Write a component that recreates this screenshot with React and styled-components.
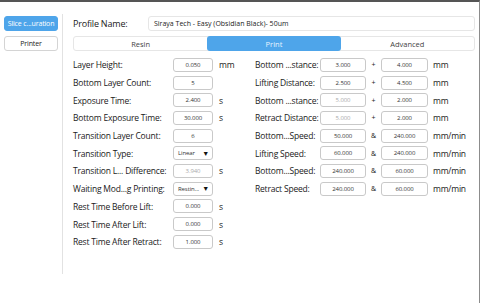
import React from "react";
import styled, { createGlobalStyle } from "styled-components";

const leftRows = [
  { label: "Layer Height:", value: "0.050", unit: "mm" },
  { label: "Bottom Layer Count:", value: "5" },
  { label: "Exposure Time:", value: "2.400", unit: "s" },
  { label: "Bottom Exposure Time:", value: "30.000", unit: "s" },
  { label: "Transition Layer Count:", value: "6" },
  { label: "Transition Type:", select: "Linear" },
  { label: "Transition L... Difference:", value: "3.940", unit: "s", dim: true },
  { label: "Waiting Mod...g Printing:", select: "Restin..." },
  { label: "Rest Time Before Lift:", value: "0.000", unit: "s" },
  { label: "Rest Time After Lift:", value: "0.000", unit: "s" },
  { label: "Rest Time After Retract:", value: "1.000", unit: "s" }
];

const rightRows = [
  { label: "Bottom ...stance:", a: "3.000", op: "+", b: "4.000", unit: "mm" },
  { label: "Lifting Distance:", a: "2.500", op: "+", b: "4.500", unit: "mm" },
  { label: "Bottom ...stance:", a: "5.000", op: "+", b: "2.000", unit: "mm", dim: true },
  { label: "Retract Distance:", a: "5.000", op: "+", b: "2.000", unit: "mm", dim: true },
  { label: "Bottom...Speed:", a: "50.000", op: "&", b: "240.000", unit: "mm/min" },
  { label: "Lifting Speed:", a: "60.000", op: "&", b: "240.000", unit: "mm/min" },
  { label: "Bottom...Speed:", a: "240.000", op: "&", b: "60.000", unit: "mm/min" },
  { label: "Retract Speed:", a: "240.000", op: "&", b: "60.000", unit: "mm/min" }
];

function App() {
  return (
    <>
      <GlobalStyle />
      <Window>
        <Sidebar>
          <SideButton active>Slice c...uration</SideButton>
          <SideButton>Printer</SideButton>
        </Sidebar>
        <Main>
          <ProfileRow>
            <ProfileLabel>Profile Name:</ProfileLabel>
            <ProfileInput>Siraya Tech - Easy (Obsidian Black)- 50um</ProfileInput>
          </ProfileRow>
          <Tabs>
            <Tab>Resin</Tab>
            <Tab active>Print</Tab>
            <Tab>Advanced</Tab>
          </Tabs>
          <Columns>
            <Column>
              {leftRows.map((r, i) => (
                <LeftRow key={i}>
                  <Label>{r.label}</Label>
                  {r.select ? (
                    <Select>
                      <span>{r.select}</span>
                      <Arrow>▼</Arrow>
                    </Select>
                  ) : (
                    <Field dim={r.dim}>{r.value}</Field>
                  )}
                  <Unit>{r.unit}</Unit>
                </LeftRow>
              ))}
            </Column>
            <Column>
              {rightRows.map((r, i) => (
                <RightRow key={i}>
                  <Label>{r.label}</Label>
                  <Field dim={r.dim}>{r.a}</Field>
                  <Op>{r.op}</Op>
                  <Field>{r.b}</Field>
                  <Unit>{r.unit}</Unit>
                </RightRow>
              ))}
            </Column>
          </Columns>
        </Main>
      </Window>
    </>
  );
}

const GlobalStyle = createGlobalStyle`
  body {
    margin: 0;
    background: #ffffff;
    font-family: "Open Sans", "Noto Sans", sans-serif;
    color: #1a1a1a;
  }
`;

const Window = styled.div`
  height: 303px;
  box-sizing: border-box;
  border-top: 2px solid #555555;
  border-right: 1px solid #8c8c8c;
  display: flex;
  align-items: flex-start;
  overflow: hidden;
`;

const Sidebar = styled.div`
  width: 54px;
  height: 258px;
  margin-top: 12px;
  padding: 2px 4px 0 4px;
  border-right: 1px solid #e2e2e2;
  display: flex;
  flex-direction: column;
  gap: 5px;
  flex-shrink: 0;
`;

const SideButton = styled.div`
  height: 15px;
  box-sizing: border-box;
  border-radius: 3px;
  border: 1px solid ${p => (p.active ? "#4ea5ea" : "#d4d4d4")};
  background: ${p => (p.active ? "#4ea5ea" : "#ffffff")};
  color: ${p => (p.active ? "#ffffff" : "#222222")};
  font-size: 7px;
  letter-spacing: -0.15px;
  display: flex;
  align-items: center;
  justify-content: center;
  white-space: nowrap;
`;

const Main = styled.div`
  flex: 1;
  padding: 14px 4px 0 10px;
  display: flex;
  flex-direction: column;
`;

const ProfileRow = styled.div`
  display: flex;
  align-items: center;
  height: 15px;
`;

const ProfileLabel = styled.div`
  width: 75px;
  font-size: 9px;
  letter-spacing: -0.2px;
`;

const ProfileInput = styled.div`
  flex: 1;
  height: 15px;
  box-sizing: border-box;
  border: 1px solid #e6e6e6;
  border-radius: 3px;
  font-size: 7px;
  padding-left: 5px;
  display: flex;
  align-items: center;
`;

const Tabs = styled.div`
  margin-top: 5px;
  height: 15px;
  display: grid;
  grid-template-columns: repeat(3, 1fr);
  border: 1px solid #e6e6e6;
  border-radius: 3px;
  box-sizing: border-box;
`;

const Tab = styled.div`
  display: flex;
  align-items: center;
  justify-content: center;
  font-size: 7.5px;
  color: ${p => (p.active ? "#e8f4ff" : "#444444")};
  background: ${p => (p.active ? "#4ea5ea" : "transparent")};
  border-radius: 3px;
  margin: ${p => (p.active ? "-1px 0" : "0")};
`;

const Columns = styled.div`
  margin-top: 5px;
  display: grid;
  grid-template-columns: 182px 1fr;
`;

const Column = styled.div`
  display: flex;
  flex-direction: column;
`;

const LeftRow = styled.div`
  height: 17.7px;
  display: grid;
  grid-template-columns: 94px 40px auto;
  column-gap: 6px;
  align-items: center;
`;

const RightRow = styled.div`
  height: 17.7px;
  display: grid;
  grid-template-columns: 65px 46px 15px 47px auto;
  align-items: center;
  & > div:last-child {
    padding-left: 5px;
  }
`;

const Label = styled.div`
  font-size: 8.5px;
  letter-spacing: -0.2px;
  white-space: nowrap;
`;

const Field = styled.div`
  height: 14px;
  box-sizing: border-box;
  border: 1px solid #c9c9c9;
  border-radius: 3px;
  font-size: 6px;
  letter-spacing: -0.1px;
  color: ${p => (p.dim ? "#aaaaaa" : "#333333")};
  display: flex;
  align-items: center;
  justify-content: center;
`;

const Select = styled(Field)`
  justify-content: space-between;
  padding: 0 3px 0 4px;
  color: #333333;
`;

const Arrow = styled.span`
  font-size: 7px;
  color: #111111;
`;

const Op = styled.div`
  font-size: 7px;
  text-align: center;
`;

const Unit = styled.div`
  font-size: 8.5px;
  letter-spacing: -0.2px;
`;

export default App;
